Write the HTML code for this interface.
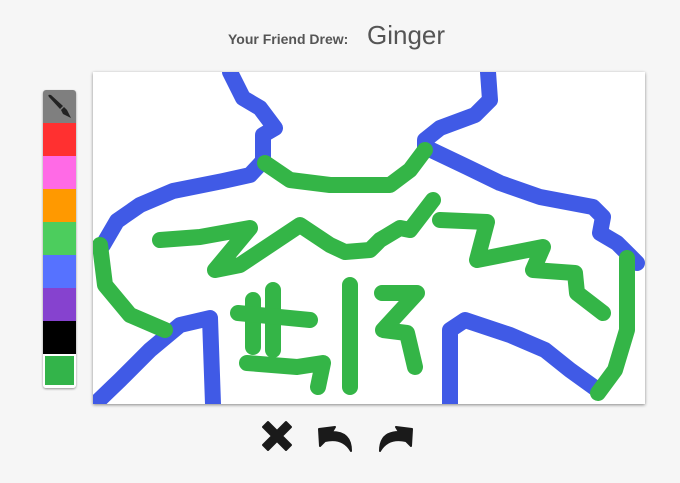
<!DOCTYPE html>
<html><head><style>
html,body{margin:0;padding:0;}
body{width:680px;height:483px;background:#f6f6f6;position:relative;overflow:hidden;font-family:"Liberation Sans",sans-serif;}
.t1{position:absolute;left:228px;top:31px;font-size:14px;font-weight:bold;color:#555;}
.t2{position:absolute;left:367px;top:20px;font-size:26px;color:#555;}
.pal{position:absolute;left:43px;top:90px;width:33px;border-radius:3px;overflow:hidden;box-shadow:0 1px 2px rgba(0,0,0,.4);}
.pal div{height:33px;}
.cv{position:absolute;left:93px;top:72px;width:552px;height:332px;background:#fff;box-shadow:0 1px 3px rgba(0,0,0,.45);overflow:hidden;}
</style></head><body>
<div class="t1">Your Friend Drew:</div>
<div class="t2">Ginger</div>
<div class="pal">
<div style="background:#7f7f7f;position:relative"><svg width="33" height="33" viewBox="0 0 33 33"><path d="M6 7 Q4 4 8 5 L20 16 L17 19 Z" fill="#222"/><path d="M21 17 L24 20 L28 28 L20 24 L18 20 Z" fill="#222"/></svg></div>
<div style="background:#ff3030"></div>
<div style="background:#ff6ae6"></div>
<div style="background:#ff9900"></div>
<div style="background:#4ccd5d"></div>
<div style="background:#5672ff"></div>
<div style="background:#8642cf"></div>
<div style="background:#000"></div>
<div style="background:#fff;height:34px;padding:0;position:relative"><div style="position:absolute;left:2px;top:2px;width:29px;height:29px;background:#33b44a"></div></div>
</div>
<div class="cv">
<svg width="552" height="332" viewBox="93 72 552 332" fill="none" stroke-linecap="round" stroke-linejoin="round" stroke-width="16">
<g stroke="#405ae6">
<polyline points="230,72 243,98 260,108 275,128 263,135 263,161 250,175 223,181 173,191 140,205 117,221 103,245"/>
<polyline points="488,72 490,100 475,115 440,128 425,140 425,147 467,167 500,183 540,197 593,207 603,217 600,233 617,243 637,263"/>
<polyline points="95,404 120,380 150,350 180,325 210,318 213,404"/>
<polyline points="450,404 450,330 465,320 510,335 545,350 570,370 595,388"/>
</g>
<g stroke="#34b547">
<polyline points="265,163 290,180 330,185 390,185 410,170 425,150"/>
<polyline points="160,240 200,237 250,228 215,270 240,265 300,225 315,235 330,245 345,252 370,250 380,240 400,228 410,230 433,200"/>
<polyline points="440,220 487,222 477,260 543,247 533,270 575,273 577,293 603,313"/>
<polyline points="627,258 627,330 615,370 598,393"/>
<polyline points="100,245 105,285 130,315 165,330"/>
<polyline points="273,290 273,350"/>
<polyline points="253,300 253,347"/>
<polyline points="238,313 310,320"/>
<polyline points="247,363 297,367 323,363 318,387"/>
<polyline points="350,285 350,387"/>
<polyline points="382,293 417,293 383,330 407,333 415,367"/>
</g>
</svg>
</div>
<svg style="position:absolute;left:255px;top:415px" width="170" height="45" viewBox="0 0 170 45">
<path d="M8 12 L13 7 L22 16 L31 7 L36 12 L27 21 L36 30 L31 35 L22 26 L13 35 L8 30 L17 21 Z" fill="#1a1a1a" stroke="#1a1a1a" stroke-width="2" stroke-linejoin="round"/>
<path d="M96 36 Q96 17 77 17 L80 12 L64 14 L65 31 L70 26 Q88 22 96 36 Z" fill="#1a1a1a" stroke="#1a1a1a" stroke-width="2" stroke-linejoin="round"/>
<path d="M125 36 Q125 17 144 17 L141 12 L157 14 L156 31 L151 26 Q133 22 125 36 Z" fill="#1a1a1a" stroke="#1a1a1a" stroke-width="2" stroke-linejoin="round"/>
</svg>
</body></html>
